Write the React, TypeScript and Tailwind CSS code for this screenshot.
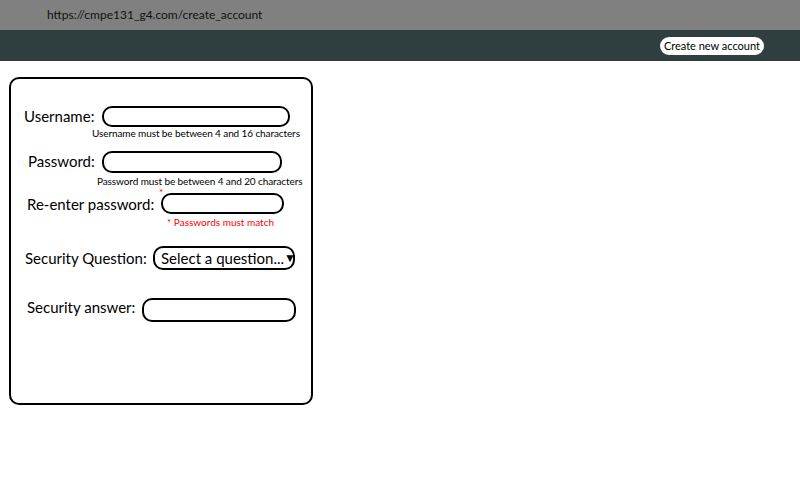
import React from 'react';

export default function App() {
    const [question, setQuestion] = React.useState('');

    return (
        <div className="w-[800px] h-[500px] bg-white text-black font-['Lato',sans-serif]">
            <div className="h-[30px] bg-[#808080] flex items-center pl-[47px] text-[12px] text-[#111]">
                https://cmpe131_g4.com/create_account
            </div>
            <div className="h-[31px] bg-[#2f3f3f] flex items-center justify-end pr-[36px]">
                <button className="h-[18px] px-[4px] bg-white rounded-full text-[11px] leading-none text-black">
                    Create new account
                </button>
            </div>
            <form className="ml-[9px] mt-[16px] w-[304px] h-[328px] border-2 border-black rounded-[10px] text-[15px] leading-[20px]">
                <div className="mt-[27px] flex items-center">
                    <label className="pl-[13px] w-[91px] -mt-[2px]">Username:</label>
                    <input className="w-[188px] h-[21px] border-2 border-black rounded-[10px] outline-none px-2" />
                </div>
                <p className="pl-[81px] text-[10px] leading-[12px] tracking-[-0.1px]">Username must be between 4 and 16 characters</p>

                <div className="mt-[12px] flex items-center">
                    <label className="pl-[17px] w-[91px] -mt-[2px]">Password:</label>
                    <input type="password" className="w-[180px] h-[22px] border-2 border-black rounded-[10px] outline-none px-2" />
                </div>
                <p className="mt-[2px] pl-[86px] text-[10px] leading-[12px] tracking-[-0.1px]">Password must be between 4 and 20 characters</p>

                <div className="mt-[6px] flex items-center">
                    <label className="pl-[16px] w-[150px]">Re-enter password:</label>
                    <div className="relative">
                        <span className="absolute -top-[6px] -left-[2px] text-[10px] leading-none text-red-600">*</span>
                        <input type="password" className="w-[123px] h-[21px] border-2 border-black rounded-[10px] outline-none px-2" />
                    </div>
                </div>
                <p className="mt-[2px] pl-[156px] text-[10px] leading-[12px] text-[#ff0000]">* Passwords must match</p>

                <div className="mt-[18px] flex items-center">
                    <label className="pl-[14px] w-[142px]">Security Question:</label>
                    <div className="relative w-[142px] h-[24px] border-2 border-black rounded-[10px] flex items-center pl-[6px] pr-[2px] text-[15px]">
                        <span className="flex-1 whitespace-nowrap">{question || 'Select a question...'}</span>
                        <span className="text-[12px] leading-none">▼</span>
                        <select value={question} onChange={e => setQuestion(e.target.value)} className="absolute inset-0 opacity-0">
                            <option value="">Select a question...</option>
                            <option>What was the name of your first pet?</option>
                            <option>What city were you born in?</option>
                        </select>
                    </div>
                </div>

                <div className="mt-[28px] flex items-center">
                    <label className="pl-[16px] w-[131px] -mt-[6px]">Security answer:</label>
                    <input className="w-[154px] h-[24px] border-2 border-black rounded-[10px] outline-none px-2" />
                </div>
            </form>
        </div>
    );
}
